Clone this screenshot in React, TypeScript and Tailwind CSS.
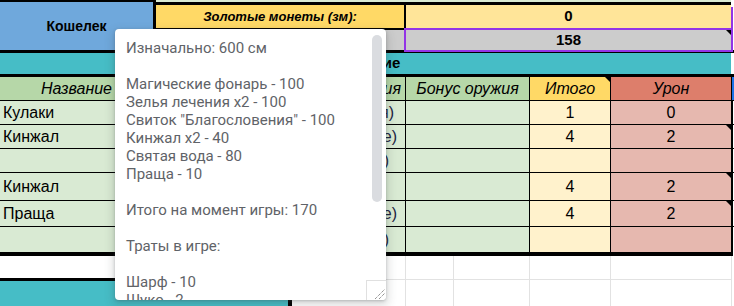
const rows = [
  { name: 'Кулаки', tail: '(Рукопашная)', tailPad: 'pr-[11px]', total: '1', dmg: '0', h: 'h-[24px] border-b', note: false },
  { name: 'Кинжал', tail: '(Фехтовальное)', tailPad: 'pr-[8px]', total: '4', dmg: '2', h: 'h-[24px] border-b', note: true },
  { name: '', tail: '(Ловкость)', tailPad: 'pr-[16px]', total: '', dmg: '', h: 'h-[24px] border-b', note: false },
  { name: 'Кинжал', tail: '', tailPad: 'pr-[8px]', total: '4', dmg: '2', h: 'h-[28px] border-b', note: true },
  { name: 'Праща', tail: '(Метательное)', tailPad: 'pr-[8px]', total: '4', dmg: '2', h: 'h-[26px] border-b', note: true },
  { name: '', tail: '(Ловкость)', tailPad: 'pr-[16px]', total: '', dmg: '', h: 'h-[25px]', note: false },
];

const noteLines = [
  'Изначально: 600 см',
  '',
  'Магические фонарь - 100',
  'Зелья лечения x2 - 100',
  'Свиток "Благословения" - 100',
  'Кинжал x2 - 40',
  'Святая вода - 80',
  'Праща - 10',
  '',
  'Итого на момент игры: 170',
  '',
  'Траты в игре:',
  '',
  'Шарф - 10',
  'Шуко - 2',
];

const gridCols = ['w-[114px]', 'w-[48px]', 'w-[76px]', 'w-[81px]', 'w-[121px]'];

function NoteMark() {
  return (
    <span className="absolute top-0 right-0 w-0 h-0 border-t-[5px] border-l-[5px] border-t-black border-l-transparent" />
  );
}

function NotePopup() {
  return (
    <div className="absolute left-[115px] top-[29px] w-[271px] h-[271px] bg-white rounded overflow-hidden shadow-[0_1px_3px_rgba(60,64,67,0.3),0_4px_8px_3px_rgba(60,64,67,0.15)]">
      <div className="pt-[10px] pl-[11px] font-['Roboto',sans-serif] text-[15px] leading-[18px] text-[#5f6368]">
        {noteLines.map((line, i) => (
          <div key={i} className="h-[18px] whitespace-pre">{line}</div>
        ))}
      </div>
      <div className="absolute left-[257px] top-[6px] w-[10px] h-[167px] rounded-full bg-[#dadce0]" />
      <div className="absolute right-0 bottom-0 w-[20px] h-[20px] bg-white border-l border-t border-[#e0e0e0]">
        <svg className="absolute right-[1px] bottom-[1px]" width="10" height="10" viewBox="0 0 10 10">
          <line x1="0" y1="10" x2="10" y2="0" stroke="#666" strokeWidth="1" strokeDasharray="1 1" />
          <line x1="4" y1="10" x2="10" y2="4" stroke="#666" strokeWidth="1" strokeDasharray="1 1" />
        </svg>
      </div>
    </div>
  );
}

export default function App() {
  return (
    <div className="relative w-[734px] h-[306px] overflow-hidden bg-white font-['Liberation_Sans',Arial,sans-serif] text-black">
      {/* wallet block */}
      <div className="flex h-[50px]">
        <div className="w-[153px] border-t-2 border-black bg-[#6fa8dc] flex items-center justify-center text-[14px] font-bold">
          Кошелек
        </div>
        <div className="w-[3px] bg-black" />
        <div className="flex flex-col w-[578px]">
          <div className="h-[2px] w-[575px] bg-[#d9ead3]" />
          <div className="h-[3px] w-[575px] bg-black" />
          <div className="flex h-[23px]">
            <div className="w-[248px] bg-[#ffd966] flex items-center justify-center text-[13px] font-bold italic">
              Золотые монеты (зм):
            </div>
            <div className="w-[2px] bg-black" />
            <div className="w-[325px] bg-[#ffe599] flex items-center justify-center text-[15px] font-bold">0</div>
          </div>
          <div className="flex h-[22px]">
            <div className="w-[248px] bg-[#cccccc] border-t-2 border-black" />
            <div className="w-[2px] bg-black" />
            <div className="relative w-[325px] bg-[#cccccc] pt-[2px] flex items-center justify-center text-[15px] font-bold">
              158
              <span className="absolute top-[2px] right-0 w-0 h-0 border-t-[5px] border-l-[5px] border-t-black border-l-transparent" />
            </div>
          </div>
        </div>
      </div>
      <div className="h-[3px] bg-black" />

      {/* section header */}
      <div className="h-[21px] w-[731px] bg-[#46bdc6] flex items-center pl-[309px] text-[15px] font-bold">
        Снаряжение
      </div>
      <div className="h-[3px] bg-black" />

      {/* column headers */}
      <div className="flex h-[24px] border-b border-black text-[16px] italic">
        <div className="w-[154px] bg-[#b6d7a8] border-r border-black flex items-center justify-center">Название</div>
        <div className="w-[137px] bg-[#b6d7a8] border-r border-black" />
        <div className="w-[115px] bg-[#b6d7a8] border-r border-black flex items-center justify-end pr-[4px]">Тип оружия</div>
        <div className="w-[124px] bg-[#b6d7a8] border-r border-black flex items-center justify-center">Бонус оружия</div>
        <div className="relative w-[81px] bg-[#ffd966] border-r border-black flex items-center justify-center">
          Итого
          <NoteMark />
        </div>
        <div className="w-[120px] bg-[#dd7e6b] flex items-center justify-center">Урон</div>
        <div className="w-[1px] bg-black" />
        <div className="w-[2px] bg-[#1a73e8]" />
      </div>

      {/* weapon rows */}
      {rows.map((r, i) => (
        <div key={i} className={`flex border-black text-[16px] ${r.h}`}>
          <div className="w-[154px] bg-[#d9ead3] border-r border-black flex items-center pl-[3px]">{r.name}</div>
          <div className="w-[137px] bg-[#d9ead3] border-r border-black" />
          <div className={`w-[115px] bg-[#d9ead3] border-r border-black flex items-center justify-end text-[#1c2340] ${r.tailPad}`}>
            {r.tail}
          </div>
          <div className="w-[124px] bg-[#d9ead3] border-r border-black" />
          <div className="w-[81px] bg-[#fff2cc] border-r border-black flex items-center justify-center">{r.total}</div>
          <div className="relative w-[120px] bg-[#e6b8af] flex items-center justify-center">
            {r.dmg}
            {r.note && <NoteMark />}
          </div>
          <div className="w-[2px] bg-black" />
        </div>
      ))}
      <div className="h-[4px] w-[733px] bg-black" />

      {/* below the table */}
      <div className="flex h-[50px]">
        <div className="w-[292px] flex flex-col">
          <div className="h-[22px] bg-white" />
          <div className="h-[3px] bg-black" />
          <div className="flex-1 bg-[#46bdc6] border-r-4 border-black" />
        </div>
        <div className="flex flex-col">
          {['h-[24px] border-b', 'h-[26px]'].map((h, i) => (
            <div key={i} className={`flex border-[#e2e2e2] ${h}`}>
              {gridCols.map((w, j) => (
                <div key={j} className={`${w} border-r border-[#e2e2e2]`} />
              ))}
            </div>
          ))}
        </div>
      </div>

      {/* purple selection */}
      <div className="absolute left-[404px] top-[28px] w-[329px] h-[24px] border-2 border-[#9334e6]" />
      <div className="absolute left-[731px] top-[7px] w-[2px] h-[22px] bg-[#9334e6]" />

      <NotePopup />
    </div>
  );
}
